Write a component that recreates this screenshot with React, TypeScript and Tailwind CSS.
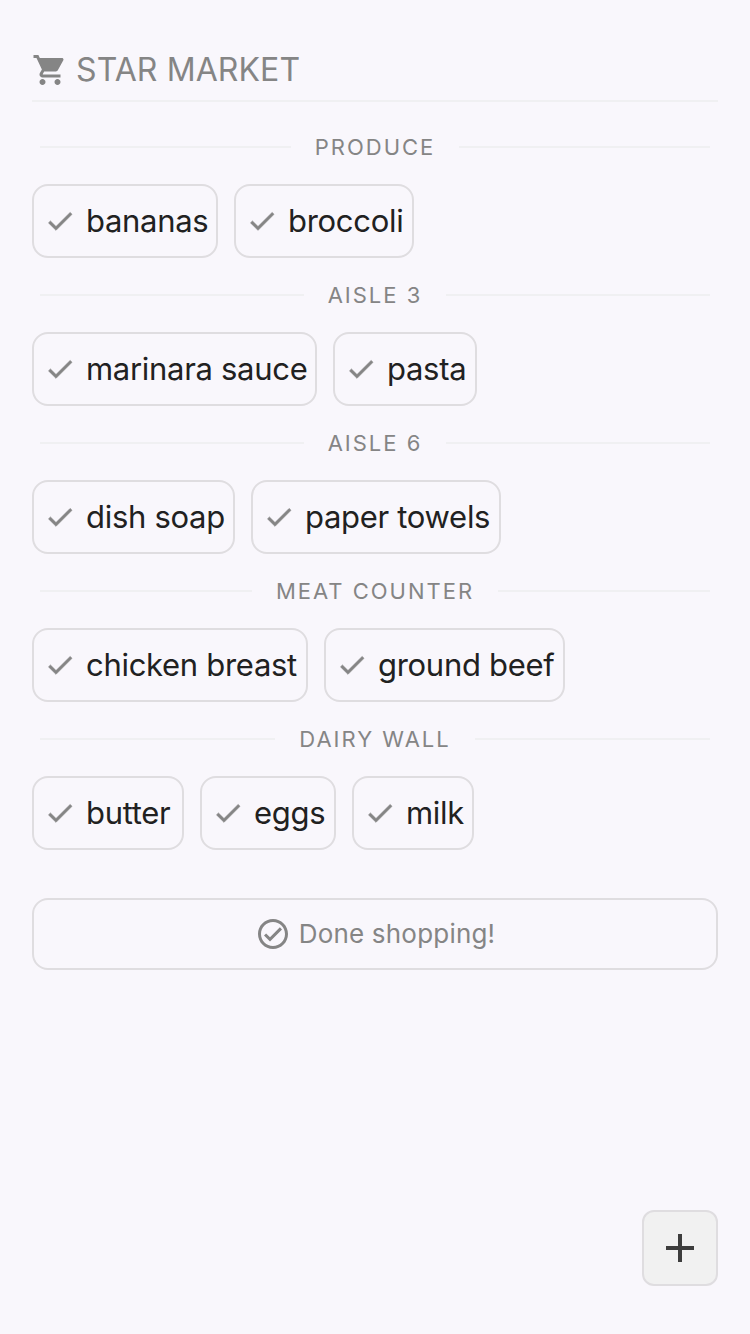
const cart = "M7 18c-1.1 0-1.99.9-1.99 2S5.9 22 7 22s2-.9 2-2-.9-2-2-2zM1 2v2h2l3.6 7.59-1.35 2.45c-.16.28-.25.61-.25.96 0 1.1.9 2 2 2h12v-2H7.42c-.14 0-.25-.11-.25-.25l.03-.12.9-1.63h7.45c.75 0 1.41-.41 1.75-1.03l3.58-6.49c.08-.14.12-.31.12-.48 0-.55-.45-1-1-1H5.21l-.94-2H1zm16 16c-1.1 0-1.99.9-1.99 2s.89 2 1.99 2 2-.9 2-2-.9-2-2-2z";
const check = "M9 16.17L4.83 12l-1.42 1.41L9 19 21 7l-1.41-1.41z";
const circleCheck = "M12 2C6.48 2 2 6.48 2 12s4.48 10 10 10 10-4.48 10-10S17.52 2 12 2zm0 18c-4.41 0-8-3.59-8-8s3.59-8 8-8 8 3.59 8 8-3.59 8-8 8zm4.59-12.42L10 14.17l-2.59-2.58L6 13l4 4 8-8z";
const sections = [
  { name: "PRODUCE", items: [["bananas", "w-[186px]"], ["broccoli", "w-[180px]"]] },
  { name: "AISLE 3", items: [["marinara sauce", "w-[285px]"], ["pasta", "w-[144px]"]] },
  { name: "AISLE 6", items: [["dish soap", "w-[203px]"], ["paper towels", "w-[250px]"]] },
  { name: "MEAT COUNTER", items: [["chicken breast", "w-[276px]"], ["ground beef", "w-[241px]"]] },
  { name: "DAIRY WALL", items: [["butter", "w-[152px]"], ["eggs", "w-[136px]"], ["milk", "w-[122px]"]] },
];

export default function App() {
  return (
    <div className="relative h-[1334px] w-[750px] overflow-hidden bg-[#f9f7fc] px-8 pt-[48px] font-['Inter',sans-serif]">
      <div className="mb-[8px] flex h-[54px] items-center gap-[8px] border-b-2 border-[#f0f0f2] pb-[8px] text-[32px] leading-none tracking-[0.1px] text-[#858585]">
        <svg viewBox="0 0 24 24" className="h-9 w-9 shrink-0 fill-[#858585]"><path d={cart} /></svg>
        <span>STAR MARKET</span>
      </div>
      {sections.map((s) => (
        <section key={s.name}>
          <div className="flex h-[74px] items-center gap-6 px-2 text-[22px] leading-none tracking-[2px] text-[#858585]">
            <div className="h-[2px] flex-1 bg-[#f0f0f2]" />
            <span>{s.name}</span>
            <div className="h-[2px] flex-1 bg-[#f0f0f2]" />
          </div>
          <div className="flex gap-4">
            {s.items.map(([label, width]) => (
              <div key={label} className={`flex h-[74px] items-center gap-[10px] rounded-2xl border-2 border-[#dfdde0] pl-[10px] text-[31px] leading-none tracking-[-0.3px] text-[#212121] ${width}`}>
                <svg viewBox="0 0 24 24" className="h-8 w-8 shrink-0 fill-[#858585] stroke-[#858585] stroke-[0.5]"><path d={check} /></svg>
                <span className="whitespace-nowrap pb-[2px]">{label}</span>
              </div>
            ))}
          </div>
        </section>
      ))}
      <button className="mt-[48px] flex h-[72px] w-full items-center justify-center gap-2 rounded-2xl border-2 border-[#dfdde0] text-[26px] leading-none tracking-[0.2px] text-[#858585]">
        <svg viewBox="0 0 24 24" className="h-9 w-9 shrink-0 fill-[#858585]"><path d={circleCheck} /></svg>
        <span>Done shopping!</span>
      </button>
      <button className="absolute bottom-12 right-8 flex h-[76px] w-[76px] items-center justify-center rounded-xl border-2 border-[#dfdde0] bg-[#f1f1f1]">
        <svg viewBox="0 0 28 28" className="h-7 w-7 fill-[#3d3d3d]"><path d="M12 0h4v12h12v4H16v12h-4V16H0v-4h12z" /></svg>
      </button>
    </div>
  );
}
